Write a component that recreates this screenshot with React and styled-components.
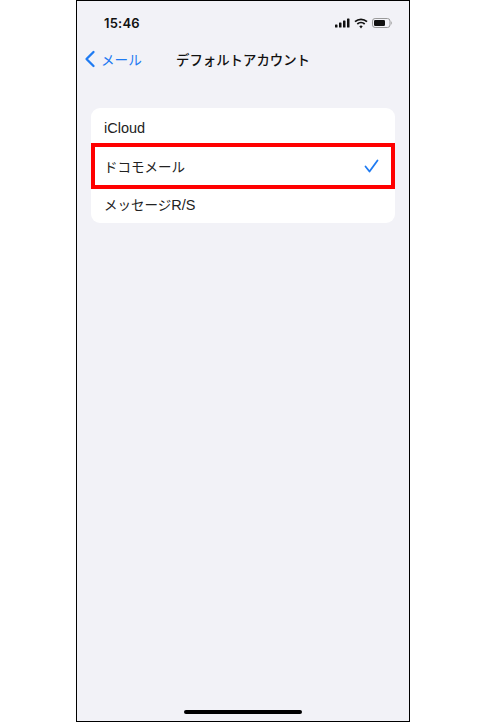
import React from "react";
import styled, { createGlobalStyle } from "styled-components";

const Global = createGlobalStyle`
  html, body { margin: 0; padding: 0; background: #fff; }
  #root { width: 496px; height: 722px; overflow: hidden; }
`;
const Stage = styled.div`
  display: flex; justify-content: flex-start; width: 496px; height: 722px; padding-left: 76px; box-sizing: border-box;
`;
const Phone = styled.div`
  box-sizing: border-box; width: 334px; height: 722px;
  border: 1.5px solid #000; background: #f2f2f7;
  display: flex; flex-direction: column;
  font-family: Inter, "Liberation Sans", "Noto Sans CJK JP", sans-serif; color: #111;
`;
const StatusBar = styled.div`
  display: flex; align-items: center; justify-content: space-between;
  height: 14px; margin-top: 15px; padding: 0 16px 0 27px;
`;
const Time = styled.span`
  font-size: 13px; font-weight: 600; font-family: Inter, sans-serif; letter-spacing: 0.2px;
`;
const StatusIcons = styled.div`display: flex; align-items: center; gap: 4px;`;
const NavBar = styled.div`
  position: relative; display: flex; align-items: center; justify-content: center;
  height: 24px; margin-top: 17px;
`;
const Back = styled.div`
  position: absolute; left: 7px; top: 0; height: 24px; display: flex; align-items: center; gap: 5px;
  color: #1f7bf2; font-size: 13.6px; font-family: "Noto Sans CJK JP", sans-serif; font-weight: 400;
`;
const Title = styled.div`
  font-family: "Noto Sans CJK JP", sans-serif; font-size: 13.4px; font-weight: 500;
`;
const Card = styled.div`
  position: relative; margin: 37px 14px 0 13.5px; background: #fff; border-radius: 9px;
  display: flex; flex-direction: column; height: 115px;
`;
const Row = styled.div`
  flex: 1; display: flex; align-items: center; justify-content: space-between;
  padding: 1px 16px 0 13.5px; font-size: 13.5px; color: #222;
  font-family: "Noto Sans CJK JP", sans-serif; font-weight: 400;
`;
const Latin = styled.span`
  font-family: "Liberation Sans", sans-serif; font-size: 14.5px;
`;
const Highlight = styled.div`
  position: absolute; left: 0; right: 0; top: 35px; height: 46px; box-sizing: border-box;
  border: 4px solid #f00;
`;
const Spacer = styled.div`flex: 1;`;
const HomeBar = styled.div`
  align-self: center; width: 118px; height: 4.5px; border-radius: 3px; background: #000; margin-bottom: 7px;
`;

export default function App() {
  return (
    <Stage>
      <Global />
      <Phone>
        <StatusBar>
          <Time>15:46</Time>
          <StatusIcons>
            <svg width="15" height="10" viewBox="0 0 15 10" fill="#111">
              <rect x="0" y="6.5" width="2.5" height="3" rx="0.6" />
              <rect x="4" y="4.5" width="2.5" height="5" rx="0.6" />
              <rect x="8" y="2.5" width="2.5" height="7" rx="0.6" />
              <rect x="12" y="0.5" width="2.5" height="9" rx="0.6" />
            </svg>
            <svg width="14" height="11" viewBox="0 0 14 11" fill="none" stroke="#111" strokeWidth="1.7">
              <path d="M1 3.6 A9 9 0 0 1 13 3.6" />
              <path d="M3.3 6 A5.6 5.6 0 0 1 10.7 6" />
              <path d="M7 10.5 L5.3 8.3 A2.6 2.6 0 0 1 8.7 8.3 Z" fill="#111" stroke="none" />
            </svg>
            <svg width="21" height="10" viewBox="0 0 21 10" fill="none">
              <rect x="0.5" y="0.5" width="17.5" height="9" rx="2.6" stroke="#999" />
              <rect x="2" y="2" width="11" height="6" rx="1.3" fill="#111" />
              <path d="M19.3 3.3 C20.3 3.7 20.3 6.3 19.3 6.7 Z" fill="#999" />
            </svg>
          </StatusIcons>
        </StatusBar>
        <NavBar>
          <Back>
            <svg width="12" height="18" viewBox="0 0 12 18" fill="none" stroke="#1f7bf2" strokeWidth="2.3" strokeLinecap="round" strokeLinejoin="round">
              <path d="M9.5 2 L2.5 9 L9.5 16" />
            </svg>
            メール
          </Back>
          <Title>デフォルトアカウント</Title>
        </NavBar>
        <Card>
          <Row><Latin>iCloud</Latin></Row>
          <Row>
            ドコモメール
            <svg width="15" height="14" viewBox="0 0 15 14" fill="none" stroke="#1f7bf2" strokeWidth="1.8" strokeLinecap="round" strokeLinejoin="round">
              <path d="M1.5 7.5 L5.5 12.5 L13.5 1.5" />
            </svg>
          </Row>
          <Row><span>メッセージ<Latin>R/S</Latin></span></Row>
          <Highlight />
        </Card>
        <Spacer />
        <HomeBar />
      </Phone>
    </Stage>
  );
}
